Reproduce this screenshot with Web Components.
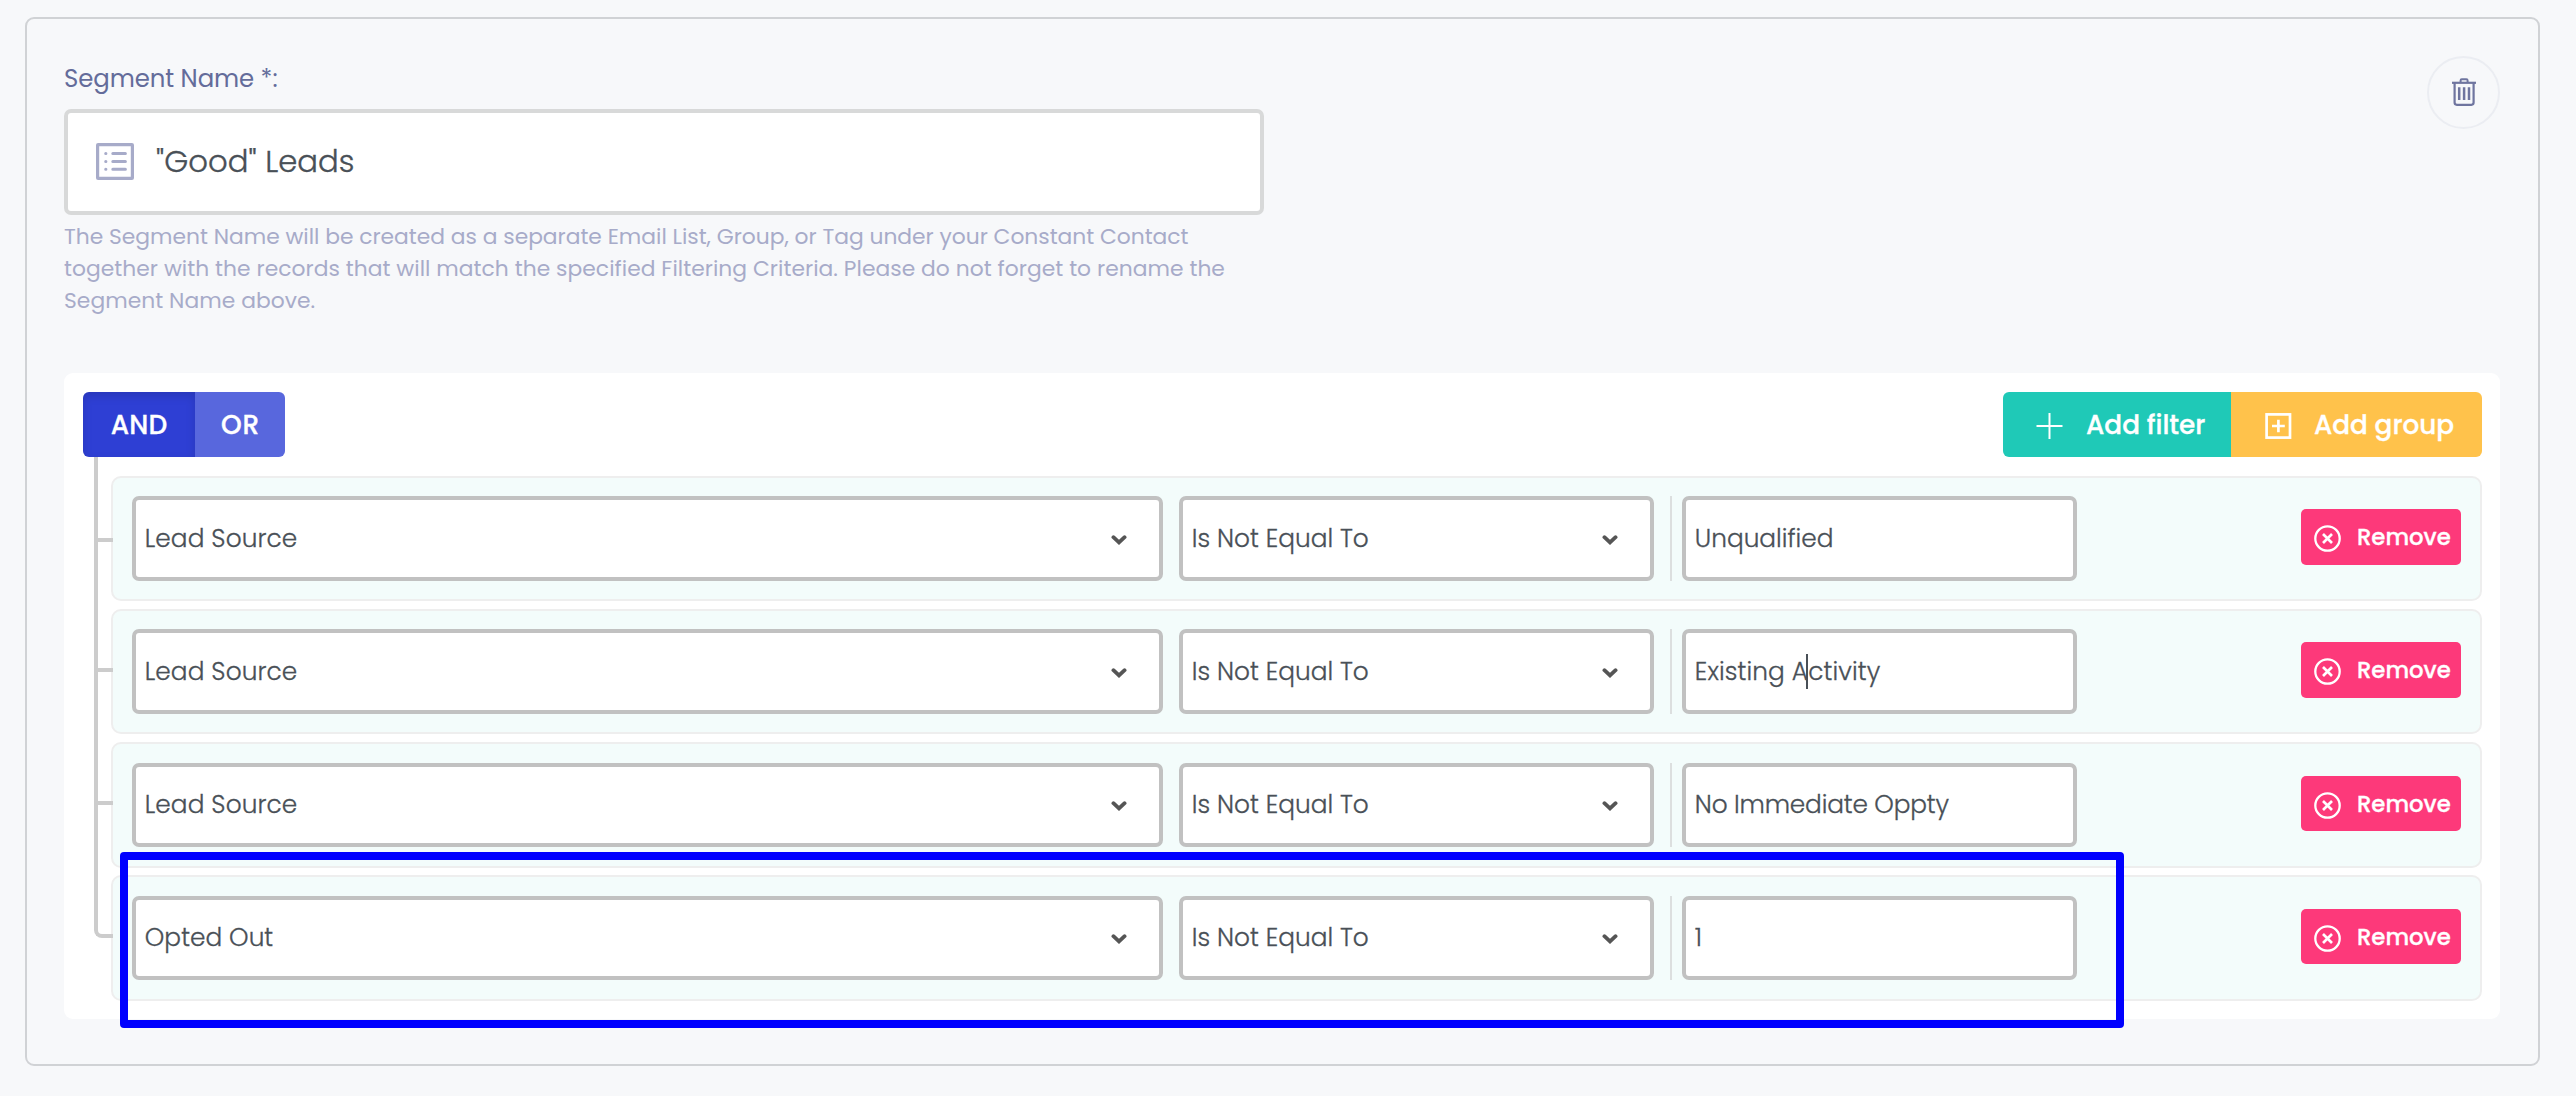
<!DOCTYPE html>
<html lang="en">
<head>
<meta charset="utf-8">
<title>Segment filters</title>
<style>
html, body { margin: 0; background: #f7f8fa; }
body { width: 2576px; height: 1096px; overflow: hidden; font-family: Poppins, Inter, "Open Sans", sans-serif; color: #495057; }
</style>
</head>
<body>
<segment-card>
  <segment-name slot="head" value='"Good" Leads' w="198.5">Segment Name *:</segment-name>
  <delete-button slot="head"></delete-button>
  <filter-group>
    <filter-row field="Lead Source" fw="152.4" value="Unqualified" vw="138.6"></filter-row>
    <filter-row field="Lead Source" fw="152.4" value="Existing Activity" vw="185.4" caret="112"></filter-row>
    <filter-row field="Lead Source" fw="152.4" value="No Immediate Oppty" vw="254.2"></filter-row>
    <filter-row field="Opted Out" fw="128.4" value="1" vw="8"></filter-row>
  </filter-group>
</segment-card>
<highlight-box></highlight-box>

<script>
const define = (name, html, setup) => customElements.define(name, class extends HTMLElement {
  connectedCallback() {
    if (this.shadowRoot) return;
    const root = this.attachShadow({ mode: 'open' });
    root.innerHTML = typeof html === 'function' ? html(this) : html;
    if (setup) setup(this, root);
  }
});
const esc = s => (s || '').replace(/&/g, '&amp;').replace(/"/g, '&quot;').replace(/</g, '&lt;');

/* One line of text, tracked so that it fills the width given in w. */
define('fit-text', `<style>:host{display:block;white-space:nowrap;flex:none}span{display:inline-block}</style><span></span>`, (el, root) => {
  const span = root.querySelector('span');
  const text = el.getAttribute('text');
  span.textContent = text;
  const target = parseFloat(el.getAttribute('w'));
  if (target && text.length > 1) {
    const ls = (target - span.getBoundingClientRect().width) / (text.length - 1);
    span.style.letterSpacing = ls + 'px';
    span.style.marginRight = -ls + 'px';
  }
});

define('segment-card', `<style>
:host{display:block;box-sizing:border-box;margin:17px 36px 0 25px;height:1049px;border:2px solid #d0d2d5;border-radius:9px;padding:37px 38px 0 37px}
.head{display:flex;justify-content:space-between;align-items:flex-start;height:317px}
</style><div class="head"><slot name="head"></slot></div><slot></slot>`);

define('segment-name', el => `<style>
:host{display:block;width:1200px}
.label{color:#646c9a;font-size:24.4px;line-height:34px;margin:6px 0 0 0;height:47px}
.box{box-sizing:border-box;height:106px;border:4px solid #d8d9d9;border-radius:7px;background:#fff;display:flex;align-items:center;padding:0 0 0 28px;gap:22px;font-size:30.7px;line-height:40px;font-weight:300;-webkit-text-stroke:.35px currentColor}
.box fit-text{margin-bottom:1px}
svg{display:block;width:38px;height:38px;flex:none}
.help{margin:6.2px 0 0 0;color:#a7abc9;font-size:21.8px;line-height:32px}
</style>
<fit-text class="label" w="213.6" text="Segment Name *:"></fit-text>
<div class="box"><svg viewBox="0 0 38 38" fill="none" stroke="#a7abc9"><rect x="1.6" y="1.6" width="34.8" height="33.8" rx=".5" stroke-width="3.2"/><g stroke-width="3" stroke-linecap="round"><path d="M16.8 10.5H29.4M16.8 18.4H29.4M16.8 26.3H29.4M9.7 10.5h.2M9.7 18.4h.2M9.7 26.3h.2"/></g></svg>
<fit-text w="${el.getAttribute('w')}" text="${esc(el.getAttribute('value'))}"></fit-text></div>
<div class="help">
<fit-text w="1124.5" text="The Segment Name will be created as a separate Email List, Group, or Tag under your Constant Contact"></fit-text>
<fit-text w="1160.9" text="together with the records that will match the specified Filtering Criteria. Please do not forget to rename the"></fit-text>
<fit-text w="251.2" text="Segment Name above."></fit-text></div>`);

define('delete-button', `<style>
:host{display:flex;box-sizing:border-box;width:73px;height:73px;border:2px solid #ebedf2;border-radius:50%;align-items:center;justify-content:center;color:#6f759f}
svg{display:block;width:24px;height:28px;margin:0 0 1px 1px}
</style><svg viewBox="0 0 24 28" fill="none" stroke="currentColor"><path d="M0 4.8h24" stroke-width="2.2"/><path d="M8.6 4.4V2.4q0-1.2 1.2-1.2h4.6q1.2 0 1.2 1.2v2" stroke-width="2"/><path d="M2.6 4.8v19.8q0 2.2 2.2 2.2h14.6q2.2 0 2.2-2.2V4.8" stroke-width="2.2"/><path d="M7.2 9.2V22M12.1 9.2V22M17 9.2V22" stroke-width="2.5"/></svg>`);

define('filter-group', `<style>
:host{display:block;box-sizing:border-box;height:646px;background:#fff;border-radius:9px;padding:19px 18px 0 19px}
.bar{display:flex;justify-content:space-between;height:65px}
.body{display:flex}
.rows{flex:1;display:flex;flex-direction:column;gap:7.68px;padding-top:19px}
.tree{position:relative;z-index:1;width:19px;margin-left:11px;margin-right:-2px;height:481px;box-sizing:border-box;border-left:4px solid #ccc;border-bottom:4px solid #ccc;border-bottom-left-radius:8px;display:flex;flex-direction:column;padding-top:81px}
.tree i{display:block;height:4px;background:#ccc}
.tree i+i{margin-top:126px}
.tree i+i+i{margin-top:129px}
</style>
<div class="bar"><and-or></and-or><add-actions></add-actions></div>
<div class="body"><div class="tree"><i></i><i></i><i></i></div><div class="rows"><slot></slot></div></div>`);

define('and-or', `<style>
:host{display:flex;width:202px;border-radius:6px;overflow:hidden;color:#fff;font-weight:500;font-size:26.4px;line-height:66px;-webkit-text-stroke:.3px #fff}
div{display:flex;justify-content:center;box-sizing:border-box}
.on{width:112px;background:#2e3fd4;box-shadow:inset 0 4px 10px rgba(0,0,0,.13)}
.off{width:90px;background:#5867dd}
</style><div class="on"><fit-text w="56.6" text="AND"></fit-text></div><div class="off"><fit-text w="38.2" text="OR"></fit-text></div>`);

define('add-actions', `<style>
:host{display:flex;width:479px;border-radius:6px;overflow:hidden;color:#fff;font-weight:500;font-size:26.3px;line-height:66px;-webkit-text-stroke:.3px #fff}
div{display:flex;box-sizing:border-box}
.f{width:228px;background:#1fc9b7;padding-left:33px;gap:23px}
.g{width:251px;background:#ffc24b;padding-left:34px;gap:22px}
svg{display:block;width:27px;height:26px;margin-top:21px}
</style>
<div class="f"><svg viewBox="0 0 27 26" fill="none" stroke="#fff" stroke-width="2"><path d="M.5 13h26M13.5 0v26"/></svg><fit-text w="119.4" text="Add filter"></fit-text></div>
<div class="g"><svg viewBox="0 0 27 26" fill="none" stroke="#fff" stroke-width="2.7"><rect x="1.6" y="1.4" width="23.4" height="23.2"/><path d="M7 13h12.8M13.4 6.8v12.4"/></svg><fit-text w="140" text="Add group"></fit-text></div>`);

define('value-box', el => `<style>
:host{position:relative;display:flex;align-items:center;box-sizing:border-box;height:84.4px;border:4px solid #c1c1c1;border-radius:7px;background:#fff;padding:0 0 0 8.8px;font-size:24.8px;font-weight:300;line-height:32px;flex:none;-webkit-text-stroke:.3px currentColor}
fit-text{padding-top:1.4px}
.grow{flex:1}
svg{display:block;width:16px;height:10px;margin:2px 32px 0 0}
.caret{position:absolute;width:2px;height:35px;top:21px;background:#495057}
</style><fit-text w="${el.getAttribute('w')}" text="${esc(el.getAttribute('text'))}"></fit-text><span class="grow"></span>
${el.hasAttribute('select') ? '<svg viewBox="0 0 16 10" fill="none" stroke="#555" stroke-width="3.8" stroke-linecap="round" stroke-linejoin="miter"><path d="M2.4 2.2L8 7.4l5.6-5.2"/></svg>' : ''}
${el.getAttribute('caret') ? `<span class="caret" style="left:${+el.getAttribute('caret') + 8}px"></span>` : ''}`);

define('remove-button', `<style>
:host{display:flex;box-sizing:border-box;width:160px;height:55.2px;border-radius:5px;background:#fd397a;color:#fff;font-weight:500;font-size:22.8px;line-height:56px;padding-left:13.4px;gap:15.6px;-webkit-text-stroke:.3px #fff}
svg{display:block;width:27px;height:27px;margin-top:16px}
</style><svg viewBox="0 0 27 27" fill="none" stroke="#fff"><circle cx="13.5" cy="13.5" r="12.2" stroke-width="2.3"/><path d="M9 9l9 9M18 9l-9 9" stroke-width="2.7"/></svg><fit-text w="93.8" text="Remove"></fit-text>`);

define('filter-row', el => `<style>
:host{display:flex;box-sizing:border-box;height:125.4px;border:2px solid #eee;border-radius:10px;background:#f3fcfb;padding:18.4px 19px 0 19px;align-items:flex-start}
.a{width:1031px;margin-right:16px}
.b{width:475px;margin-right:16px}
.sep{width:2px;height:84.4px;background:#dcdfdf;margin-right:10px}
.c{width:395px}
remove-button{margin:13px 0 0 auto}
</style>
<value-box class="a" select w="${el.getAttribute('fw')}" text="${esc(el.getAttribute('field'))}"></value-box>
<value-box class="b" select w="177" text="Is Not Equal To"></value-box>
<span class="sep"></span>
<value-box class="c" w="${el.getAttribute('vw')}" text="${esc(el.getAttribute('value'))}" caret="${el.getAttribute('caret') || ''}"></value-box>
<remove-button></remove-button>`);

define('highlight-box', `<style>:host{position:absolute;box-sizing:border-box;left:120px;top:852px;width:2004px;height:176px;border:8px solid #00f;border-radius:4px}</style>`);
</script>
</body>
</html>
